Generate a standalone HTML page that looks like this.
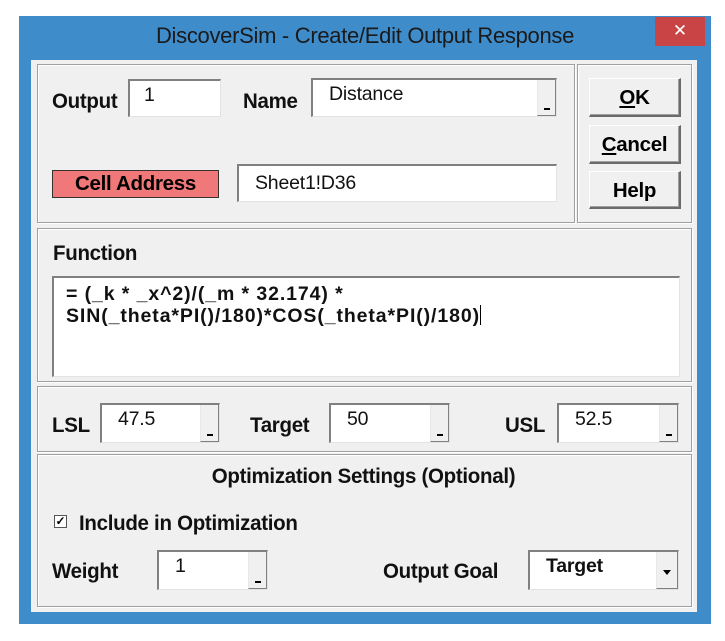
<!DOCTYPE html>
<html><head><style>
body{margin:0;width:725px;height:641px;background:#fff;position:relative;overflow:hidden;font-family:"Liberation Sans",Arial,sans-serif;}
.a{position:absolute;}
.win{left:19px;top:16px;width:692px;height:608px;background:#3f8ccb;}
.client{left:31px;top:60px;width:666px;height:552px;background:#f0f0f0;}
.title{left:19px;top:23px;width:692px;text-align:center;font-size:22px;color:#1a1a1a;letter-spacing:-0.3px;}
.close{left:655px;top:17px;width:50px;height:29px;background:#c94444;color:#fff;font-size:17px;text-align:center;line-height:28px;}
.panel{border:1px solid #a0a0a0;box-shadow:inset 1px 1px 0 #fff,1px 1px 0 #fff;}
.field{background:#fff;border-top:2px solid #808080;border-left:2px solid #808080;border-right:1px solid #e3e3e3;border-bottom:1px solid #e3e3e3;box-sizing:border-box;font-size:19.5px;color:#111;padding:3px 0 0 16px;letter-spacing:-0.2px;}
.sb{position:absolute;right:0;top:0;bottom:0;width:19px;background:#f0f0f0;border-left:1px solid #e8e8e8;border-right:1px solid #808080;border-bottom:1px solid #808080;box-sizing:border-box;}
.sb.u:after{content:"";position:absolute;left:6px;bottom:5px;width:6px;height:2px;background:#000;}
.lbl{font-weight:bold;font-size:20.5px;color:#111;letter-spacing:-0.3px;transform:scaleY(1.05);transform-origin:left top;}
.btn{background:#f0f0f0;border-top:1px solid #fff;border-left:1px solid #fff;border-right:2px solid #6a6a6a;border-bottom:2px solid #6a6a6a;box-shadow:inset -1px -1px 0 #a0a0a0;box-sizing:border-box;font-weight:bold;font-size:20.5px;text-align:center;letter-spacing:-0.3px;}
</style></head><body>
<div class="a win"></div>
<div class="a title">DiscoverSim - Create/Edit Output Response</div>
<div class="a close">✕</div>
<div class="a client"></div>

<div class="a panel" style="left:37px;top:64px;width:536px;height:157px;"></div>
<div class="a panel" style="left:577px;top:64px;width:113px;height:157px;"></div>
<div class="a panel" style="left:37px;top:228px;width:653px;height:152px;"></div>
<div class="a panel" style="left:37px;top:386px;width:653px;height:64px;"></div>
<div class="a panel" style="left:37px;top:454px;width:653px;height:151px;"></div>

<div class="a lbl" style="left:52px;top:89px;">Output</div>
<div class="a field" style="left:128px;top:79px;width:93px;height:38px;padding-left:14px;">1</div>
<div class="a lbl" style="left:243px;top:89px;">Name</div>
<div class="a field" style="left:311px;top:78px;width:246px;height:39px;">Distance<div class="sb u"></div></div>
<div class="a" style="left:52px;top:170px;width:167px;height:28px;background:#f07878;border:1px solid #333;box-sizing:border-box;font-weight:bold;font-size:20.5px;text-align:center;line-height:26px;letter-spacing:-0.3px;">Cell Address</div>
<div class="a field" style="left:237px;top:164px;width:320px;height:38px;padding-top:6px;">Sheet1!D36</div>

<div class="a btn" style="left:589px;top:78px;width:92px;height:39px;line-height:37px;"><u>O</u>K</div>
<div class="a btn" style="left:589px;top:125px;width:92px;height:39px;line-height:37px;"><u>C</u>ancel</div>
<div class="a btn" style="left:589px;top:171px;width:92px;height:38px;line-height:37px;">Help</div>

<div class="a lbl" style="left:53px;top:241px;">Function</div>
<div class="a field" style="left:52px;top:276px;width:628px;height:101px;padding:5px 0 0 12px;font-weight:bold;font-size:19.5px;line-height:22px;letter-spacing:0.9px;">= (_k * _x^2)/(_m * 32.174) *<br>SIN(_theta*PI()/180)*COS(_theta*PI()/180)<span style="display:inline-block;width:1px;height:20px;background:#000;vertical-align:-3px;"></span></div>

<div class="a lbl" style="left:52px;top:413px;">LSL</div>
<div class="a field" style="left:100px;top:403px;width:120px;height:40px;">47.5<div class="sb u"></div></div>
<div class="a lbl" style="left:250px;top:413px;">Target</div>
<div class="a field" style="left:329px;top:403px;width:121px;height:40px;">50<div class="sb u"></div></div>
<div class="a lbl" style="left:505px;top:413px;">USL</div>
<div class="a field" style="left:557px;top:403px;width:122px;height:40px;">52.5<div class="sb u"></div></div>

<div class="a lbl" style="left:37px;top:464px;width:653px;text-align:center;">Optimization Settings (Optional)</div>
<div class="a" style="left:54px;top:515px;width:13px;height:13px;background:#fff;border:1px solid #555;box-sizing:border-box;font-size:12px;line-height:11px;text-align:center;font-weight:bold;">✓</div>
<div class="a lbl" style="left:79px;top:511px;">Include in Optimization</div>
<div class="a lbl" style="left:52px;top:559px;">Weight</div>
<div class="a field" style="left:157px;top:550px;width:111px;height:40px;">1<div class="sb u"></div></div>
<div class="a lbl" style="left:383px;top:559px;">Output Goal</div>
<div class="a field" style="left:528px;top:550px;width:151px;height:40px;font-weight:bold;">Target<div class="sb" style="width:22px;"></div><div class="a" style="right:7px;top:18px;width:0;height:0;border-left:4px solid transparent;border-right:4px solid transparent;border-top:5px solid #000;"></div></div>
</body></html>
